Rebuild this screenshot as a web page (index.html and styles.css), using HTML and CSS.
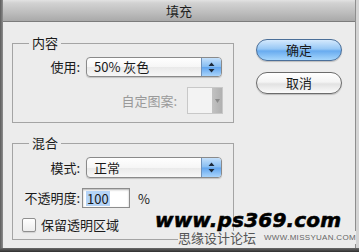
FILE: index.html
```html
<!DOCTYPE html>
<html lang="zh">
<head>
<meta charset="utf-8">
<title>填充</title>
<link rel="stylesheet" href="styles.css">
</head>
<body>
<div class="screen">
  <div class="edge-left"></div>
  <div class="window">
    <div class="titlebar">填充</div>
    <div class="body">
      <div class="groups">
        <fieldset class="group group-content">
          <legend>内容</legend>
          <div class="row">
            <span class="label">使用:</span>
            <div class="select">
              <span class="select-text">50% 灰色</span>
              <span class="select-arrow">
                <svg width="7" height="11" viewBox="0 0 7 11"><path d="M3.5 0.5 L6.5 4 L0.5 4 Z M0.5 7 L6.5 7 L3.5 10.5 Z" fill="#1d2a3a"/></svg>
              </span>
            </div>
          </div>
          <div class="row row-pattern">
            <span class="label-disabled">自定图案:</span>
            <div class="pattern">
              <span class="pattern-arrow">
                <svg width="5" height="6" viewBox="0 0 5 6"><path d="M0 1 L5 1 L2.5 5 Z" fill="#8a8a8a"/></svg>
              </span>
            </div>
          </div>
        </fieldset>
        <fieldset class="group group-blend">
          <legend>混合</legend>
          <div class="row">
            <span class="label">模式:</span>
            <div class="select select-tall">
              <span class="select-text">正常</span>
              <span class="select-arrow">
                <svg width="7" height="11" viewBox="0 0 7 11"><path d="M3.5 0.5 L6.5 4 L0.5 4 Z M0.5 7 L6.5 7 L3.5 10.5 Z" fill="#1d2a3a"/></svg>
              </span>
            </div>
          </div>
          <div class="row row-opacity">
            <span class="label">不透明度:</span>
            <div class="text-input"><span class="selected">100</span></div>
            <span class="percent">%</span>
          </div>
          <div class="row row-check">
            <span class="checkbox"></span>
            <span class="check-label">保留透明区域</span>
          </div>
        </fieldset>
      </div>
      <div class="buttons">
        <div class="btn btn-default">确定</div>
        <div class="btn">取消</div>
      </div>
    </div>
    <div class="watermark">
      <div class="wm-main">www.ps369.com</div>
      <div class="wm-sub"><span class="wm-cn">思缘设计论坛</span><span class="wm-en">WWW.MISSYUAN.COM</span></div>
    </div>
  </div>
  <div class="edge-right"></div>
</div>
<div class="bottom-edge"></div>
</body>
</html>
```
FILE: styles.css
```css
* { box-sizing: border-box; }

body {
  margin: 0;
  width: 359px;
  height: 252px;
  overflow: hidden;
  background: #3a3a3a;
  font-family: "Noto Sans CJK SC", "Noto Sans", sans-serif;
  font-size: 13px;
  color: #1a1a1a;
}

.screen {
  display: flex;
  height: 248px;
}

.edge-left {
  width: 3px;
  background: linear-gradient(90deg, #5c5c5c, #8e8e8e);
}

.window {
  width: 352px;
  position: relative;
  background: #ececec;
  display: flex;
  flex-direction: column;
}

.edge-right {
  width: 4px;
  background: #d4d4d4;
  border-left: 1px solid #8e8e8e;
}

.bottom-edge {
  height: 4px;
  background: linear-gradient(#6a6a6a, #2e2e2e);
}

.titlebar {
  height: 22px;
  background: linear-gradient(#e2e2e2 0, #d2d2d2 3px, #bdbdbd 60%, #a9a9a9 100%);
  border-bottom: 1px solid #7c7c7c;
  display: flex;
  align-items: center;
  justify-content: center;
  font-size: 13px;
  color: #1e1e1e;
  line-height: 1;
}

.body {
  display: flex;
  padding: 13px 0 0 9px;
}

.groups {
  width: 222px;
  display: flex;
  flex-direction: column;
  gap: 12px;
}

.group {
  margin: 0;
  min-width: 0;
  border: 1px solid #a4a4a4;
  padding: 6px 10px 8px 0;
}

.group-blend {
  padding-bottom: 6px;
}

legend {
  padding: 0 3px;
  margin-left: 16px;
  line-height: 16px;
  font-size: 13px;
  color: #1a1a1a;
}

.row {
  display: flex;
  align-items: center;
}

.label {
  width: 67px;
  margin-right: 6px;
  text-align: right;
  white-space: nowrap;
  line-height: 16px;
}

.select {
  width: 136px;
  height: 20px;
  border: 1px solid #8a8a8a;
  border-radius: 4px;
  background: linear-gradient(#ffffff, #f6f6f6 50%, #e9e9e9 51%, #f7f7f7);
  box-shadow: 0 1px 1px rgba(0, 0, 0, 0.18);
  display: flex;
  align-items: center;
  overflow: hidden;
}

.select-tall {
  height: 21px;
}

.select-text {
  flex: 1;
  padding-left: 7px;
  line-height: 16px;
}

.select-arrow {
  width: 20px;
  align-self: stretch;
  background: linear-gradient(#c4e0fb, #86bdf2 48%, #62a5ee 52%, #a9d4fb);
  border-left: 1px solid #6f92bb;
  display: flex;
  align-items: center;
  justify-content: center;
}

.row-pattern {
  margin-top: 10px;
  justify-content: flex-end;
}

.label-disabled {
  color: #9a9a9a;
  margin-right: 10px;
  line-height: 16px;
}

.pattern {
  width: 36px;
  height: 27px;
  border: 1px solid #c8c8c8;
  background: #f3f3f3;
  display: flex;
  justify-content: flex-end;
}

.pattern-arrow {
  width: 10px;
  background: linear-gradient(90deg, #c2c2c2, #b0b0b0);
  display: flex;
  align-items: center;
  justify-content: center;
}

.row-opacity {
  margin-top: 10px;
}

.text-input {
  width: 48px;
  height: 20px;
  margin-left: -4px;
  border: 1px solid #8c8c8c;
  background: #ffffff;
  box-shadow: inset 0 1px 2px rgba(0, 0, 0, 0.3);
  padding-left: 3px;
  display: flex;
  align-items: center;
}

.selected {
  background: #b5d4f7;
  line-height: 15px;
  padding: 0 1px;
}

.percent {
  margin-left: 8px;
}

.row-check {
  margin-top: 9px;
  padding-left: 9px;
}

.checkbox {
  width: 14px;
  height: 14px;
  border: 1px solid #8f8f8f;
  border-radius: 2px;
  background: linear-gradient(#ffffff, #ededed);
  box-shadow: 0 1px 1px rgba(0, 0, 0, 0.12);
}

.check-label {
  margin-left: 5px;
  line-height: 16px;
}

.buttons {
  margin-left: 22px;
  margin-top: 4px;
  display: flex;
  flex-direction: column;
  gap: 11px;
}

.btn {
  width: 86px;
  height: 22px;
  border-radius: 11px;
  border: 1px solid #6c6c6c;
  background: linear-gradient(#ffffff, #f4f4f4 45%, #e2e2e2 55%, #fbfbfb);
  box-shadow: 0 1px 1px rgba(0, 0, 0, 0.2);
  display: flex;
  align-items: center;
  justify-content: center;
  line-height: 16px;
}

.btn-default {
  border-color: #4b6f99;
  background: linear-gradient(#d4e9fd, #96c7f5 45%, #68abef 55%, #a6d6fc);
}

.watermark {
  position: absolute;
  left: 152px;
  top: 210px;
  white-space: nowrap;
}

.wm-main {
  font-family: "DejaVu Sans", sans-serif;
  font-weight: bold;
  font-style: italic;
  font-size: 20px;
  line-height: 20px;
  height: 21px;
  color: #000;
  -webkit-text-stroke: 0.6px #000;
  letter-spacing: 0.2px;
}

.wm-sub {
  margin-left: 23px;
  background: #ececec;
  display: flex;
  align-items: center;
  height: 13px;
  color: #555;
}

.wm-cn {
  font-size: 13px;
  line-height: 13px;
}

.wm-en {
  margin-left: 8px;
  font-family: "Liberation Sans", sans-serif;
  font-size: 8px;
  line-height: 10px;
  letter-spacing: 0.3px;
  color: #666;
}
```
